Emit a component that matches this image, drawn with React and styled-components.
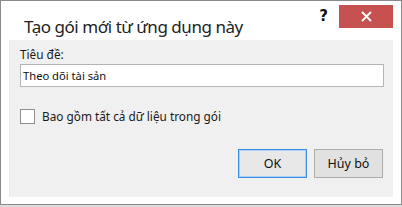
import React from "react";
import styled, { createGlobalStyle } from "styled-components";

const Global = createGlobalStyle`
  html, body { margin: 0; padding: 0; background: #dcdcdc; }
  body { font-family: "Noto Sans", "Open Sans", sans-serif; }
`;

const Window = styled.div`
  box-sizing: border-box;
  width: 402px;
  height: 205px;
  border: 1px solid #8a8a8a;
  background: #ffffff;
  display: flex;
  flex-direction: column;
`;

const TitleBar = styled.div`
  height: 39px;
  display: flex;
  align-items: flex-start;
  padding: 0 8px 0 23px;
`;

const Title = styled.div`
  flex: 1;
  font-size: 17px;
  color: #222;
  margin-top: 14px;
  letter-spacing: -0.45px;
`;

const Help = styled.div`
  font-family: "DejaVu Sans", sans-serif;
  font-weight: bold;
  font-size: 15px;
  color: #111;
  margin: 6px 11px 0 0;
`;

const Close = styled.div`
  width: 54px;
  height: 23px;
  margin-top: 4px;
  background: #c75050;
  display: flex;
  align-items: center;
  justify-content: center;
`;

const Panel = styled.div`
  box-sizing: border-box;
  margin: 0 8px;
  height: 157px;
  background: #f0f0f0;
  border-left: 1px solid #e6e6e6;
  padding: 6px 9px 0 10px;
  display: flex;
  flex-direction: column;
  font-size: 11.8px;
  color: #1a1a1a;
`;

const Label = styled.div`
  line-height: 16px;
`;

const Input = styled.div`
  box-sizing: border-box;
  margin-top: 2px;
  height: 23px;
  border: 1px solid #b4b4b4;
  background: #fff;
  padding: 0 2px;
  display: flex;
  align-items: center;
  font-size: 11.2px;
  color: #111;
`;

const CheckRow = styled.label`
  margin-top: 21px;
  display: flex;
  align-items: center;
  gap: 7px;
`;

const Box = styled.span`
  box-sizing: border-box;
  width: 15px;
  height: 15px;
  border: 1px solid #8f8f8f;
  background: #fff;
`;

const Buttons = styled.div`
  margin-top: 25px;
  display: flex;
  justify-content: flex-end;
  gap: 7px;
  padding-right: 1px;
`;

const Button = styled.div`
  box-sizing: border-box;
  width: 69px;
  height: 29px;
  display: flex;
  align-items: center;
  justify-content: center;
  font-size: 12.5px;
  color: #111;
  background: ${(p) => (p.$primary ? "#e8e8e8" : "#e1e1e1")};
  border: 1px solid ${(p) => (p.$primary ? "#3c8ee6" : "#adadad")};
  box-shadow: ${(p) => (p.$primary ? "inset 0 0 0 1px #a9d0f5" : "none")};
`;

export default function App() {
  return (
    <>
      <Global />
      <Window>
        <TitleBar>
          <Title>Tạo gói mới từ ứng dụng này</Title>
          <Help>?</Help>
          <Close>
            <svg width="11" height="11" viewBox="0 0 11 11">
              <path d="M1 1 L10 10 M10 1 L1 10" stroke="#fff" strokeWidth="1.8" />
            </svg>
          </Close>
        </TitleBar>
        <Panel>
          <Label>Tiêu đề:</Label>
          <Input>Theo dõi tài sản</Input>
          <CheckRow>
            <Box />
            <span>Bao gồm tất cả dữ liệu trong gói</span>
          </CheckRow>
          <Buttons>
            <Button $primary>OK</Button>
            <Button>Hủy bỏ</Button>
          </Buttons>
        </Panel>
      </Window>
    </>
  );
}
